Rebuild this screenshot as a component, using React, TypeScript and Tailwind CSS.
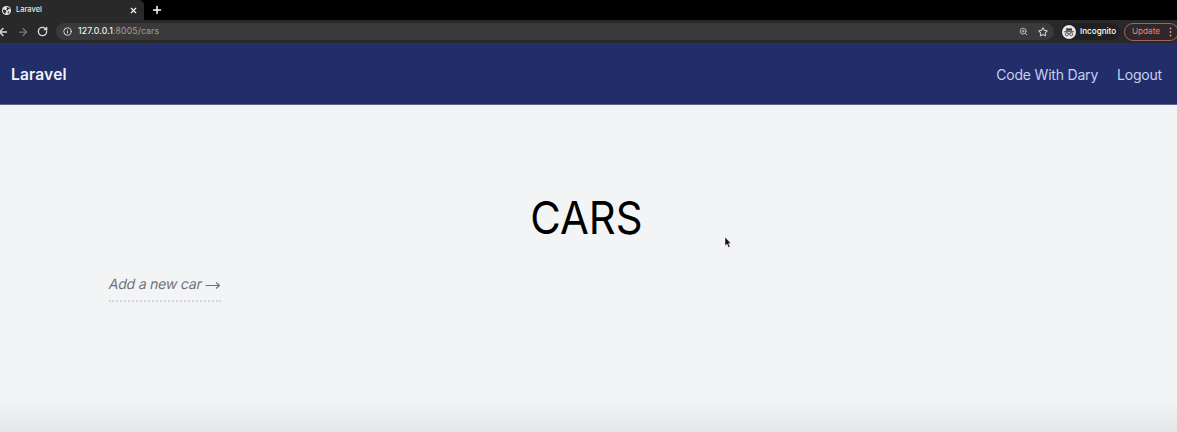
import React from 'react';
import { ArrowLeft, ArrowRight, Info, Plus, RotateCw, Star, X, ZoomIn } from 'lucide-react';

function Globe() {
  return (
    <svg className="h-[9px] w-[9px] shrink-0" viewBox="0 0 18 18">
      <circle cx="9" cy="9" r="9" fill="#e8eaed" />
      <path d="M2 7l5 1 2 3-2 2v3C4 15 1.500 12 2 7zM9 2l5 1 2 4-3-1-2 3-3-2 2-2zM12 11l3 0-2 4-2-1z" fill="#292929" />
    </svg>
  );
}

function IncognitoBadge() {
  return (
    <svg className="h-[14px] w-[14px] shrink-0" viewBox="0 0 28 28">
      <circle cx="14" cy="14" r="14" fill="#e8e8e8" />
      <path d="M9 6l5 1 5-1 1.500 5.500h-13zM4.500 12.500h19v2h-19z" fill="#3c3c3f" />
      <g fill="none" stroke="#3c3c3f" strokeWidth="1.700">
        <circle cx="9.500" cy="18.500" r="3" />
        <circle cx="18.500" cy="18.500" r="3" />
        <path d="M12.500 18q1.500-1 3 0" />
      </g>
    </svg>
  );
}

function TabStrip() {
  return (
    <div className="flex h-5 bg-black text-white">
      <div className="flex w-[144px] items-center rounded-tr-[5px] bg-[#292929] pl-[2px] pr-[6px]">
        <Globe />
        <span className="ml-[5px] text-[7.500px] leading-none font-medium text-[#e8e8e8]">Laravel</span>
        <X className="ml-auto h-[9px] w-[9px]" strokeWidth={3} />
      </div>
      <Plus className="ml-[7px] mt-[4px] h-[12px] w-[12px]" strokeWidth={3} />
    </div>
  );
}

function Toolbar() {
  return (
    <div className="flex h-[23px] items-center bg-[#292929] text-[#dcdcdc]">
      <ArrowLeft className="-ml-[3px] h-[12px] w-[12px] shrink-0" strokeWidth={2.800} />
      <ArrowRight className="ml-[8px] h-[12px] w-[12px] shrink-0 text-[#777777]" strokeWidth={2.500} />
      <RotateCw className="ml-[8px] h-[11px] w-[11px] shrink-0" strokeWidth={3} />
      <div className="ml-[8px] flex h-[17px] w-[998px] shrink-0 items-center rounded-full bg-[#3a3a3a] pl-[7px] pr-[6px]">
        <Info className="h-[9px] w-[9px]" strokeWidth={2.500} />
        <span className="ml-[6px] text-[8.700px] leading-none font-medium tracking-[0.12px] text-[#eeeeee]">
          127.0.0.1<span className="font-normal text-[#a0a0a0]">:8005/cars</span>
        </span>
        <ZoomIn className="ml-auto h-[9px] w-[9px] text-[#bbbbbb]" strokeWidth={2.500} />
        <Star className="ml-[10px] h-[10px] w-[10px] text-[#cccccc]" strokeWidth={2.500} />
      </div>
      <div className="ml-[7px] flex h-[17px] w-[59px] shrink-0 items-center rounded-full bg-[#202020] pl-[1px]">
        <IncognitoBadge />
        <span className="ml-[4px] text-[8.100px] leading-none font-medium text-white">Incognito</span>
      </div>
      <div className="ml-[4px] flex h-[18px] w-[55px] shrink-0 items-center rounded-full border border-[#a36067] bg-[#302729] pl-[7px] text-[#e5848a]">
        <span className="text-[8.200px] leading-none">Update</span>
        <svg className="ml-[9px] h-[10px] w-[3px]" viewBox="0 0 3 10" fill="#d9949a">
          <circle cx="1.500" cy="1.500" r=".9" />
          <circle cx="1.500" cy="5" r=".9" />
          <circle cx="1.500" cy="8.500" r=".9" />
        </svg>
      </div>
    </div>
  );
}

export default function App() {
  return (
    <div className="flex h-[432px] w-[1177px] flex-col overflow-hidden bg-[#f3f4f6] font-['Inter',sans-serif]">
      <TabStrip />
      <Toolbar />
      <header className="flex h-[62px] shrink-0 items-center justify-between border-b border-[#5d6389] bg-[#222e69] pl-[11px] pr-[15px] pt-[2px]">
        <a className="text-[15.500px] font-semibold tracking-[0.2px] text-[#f3f4fa]">Laravel</a>
        <nav className="flex gap-[19px] text-[14px] tracking-[-0.2px] text-[#c6d1f0]">
          <a>Code With Dary</a>
          <a>Logout</a>
        </nav>
      </header>
      <main className="relative flex-1 px-[109px] pt-[88px]">
        <h1 className="flex justify-center pr-[4px] text-[45px] leading-[50px] text-black">
          <span className="inline-block scale-x-[0.93]">CARS</span>
        </h1>
        <div className="mt-[32px] flex">
          <a className="flex h-[27px] w-[112px] items-start justify-between border-b-2 border-dotted border-[#d5d7da] text-[14px] leading-[20px] whitespace-nowrap text-[#6f7278]">
            <span className="-mt-px inline-block -skew-x-12 tracking-[-0.2px]">Add a new car</span>
            <svg className="mt-[6px] h-[9px] w-[16px]" viewBox="0 0 16 9" fill="none" stroke="currentColor" strokeWidth="1.100">
              <path d="M.5 4.500h14M11 1.500l3.500 3-3.500 3" />
            </svg>
          </a>
        </div>
        <svg className="absolute left-[724px] top-[131px] h-[13px] w-[8px]" viewBox="0 0 8 13">
          <path d="M1 1v9l2-2 1.500 3.500 1.500-.7L4.600 7.500H7z" fill="#111111" stroke="#ffffff" strokeWidth=".5" />
        </svg>
      </main>
      <div className="h-8 shrink-0 bg-linear-to-b from-[#f3f4f6] to-[#e5e6e8]" />
    </div>
  );
}
